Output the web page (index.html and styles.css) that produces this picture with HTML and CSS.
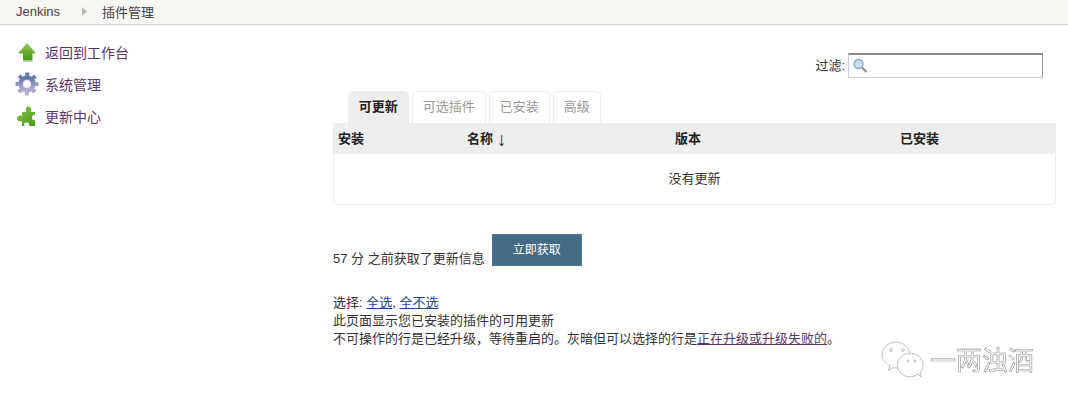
FILE: index.html
```html
<!DOCTYPE html>
<html lang="zh-CN">
<head>
  <meta charset="UTF-8">
  <title>插件管理 [Jenkins]</title>
  <link rel="stylesheet" href="styles.css">
</head>
<body>

  <div class="breadcrumbs">
    <a href="#">Jenkins</a>
    <svg class="crumb-arrow" width="5" height="9" viewBox="0 0 5 9"><path d="M0 0l5 4.500L0 9z" fill="#b4bab0"/></svg>
    <a href="#">插件管理</a>
  </div>

  <div class="page">
    <div class="side-panel">
      <div class="task">
        <svg class="task-icon" width="24" height="24" viewBox="0 0 24 24">
          <defs>
            <linearGradient id="up" x1="0" y1="0" x2="0" y2="1"><stop offset="0" stop-color="#9cc46a"/><stop offset=".5" stop-color="#6aae2c"/><stop offset="1" stop-color="#3f9a12"/></linearGradient>
          </defs>
          <path d="M12 3L21 13.500H17.500V20.500H8V13.500H3z" fill="url(#up)"/>
          <path d="M8 20.500h9.500V22H8z" fill="#c3cfba"/>
        </svg>
        <a href="#">返回到工作台</a>
      </div>
      <div class="task">
        <svg class="task-icon" width="24" height="24" viewBox="0 0 24 24">
          <defs>
            <linearGradient id="gear" x1="0" y1="0" x2="0" y2="1"><stop offset="0" stop-color="#5f78a8"/><stop offset=".55" stop-color="#9597c2"/><stop offset="1" stop-color="#b3b0cd"/></linearGradient>
          </defs>
          <circle cx="12" cy="12" r="9.500" fill="none" stroke="url(#gear)" stroke-width="4" stroke-dasharray="3.900 3.560" stroke-dashoffset="2"/>
          <circle cx="12" cy="12" r="6.500" fill="none" stroke="url(#gear)" stroke-width="4.500"/>
          <circle cx="12" cy="12" r="3.600" fill="#fff" stroke="#d5d5e2" stroke-width=".8"/>
        </svg>
        <a href="#">系统管理</a>
      </div>
      <div class="task">
        <svg class="task-icon" width="24" height="24" viewBox="0 0 24 24">
          <defs>
            <linearGradient id="piece" x1="0" y1="0" x2="1" y2="1"><stop offset="0" stop-color="#8cc84a"/><stop offset="1" stop-color="#45991c"/></linearGradient>
          </defs>
          <path d="M7 8H11.500C10 5 11 2.500 13.500 2.500S17 5 15.500 8H20V11C18 10 17 12 17 13.500S18 17 20 16V22H14C15 20 13.500 18.500 11.500 18.500S8.500 20 9.500 22H7V17C5 18 2 17 2 14.500S5 11 7 12z" fill="url(#piece)"/>
        </svg>
        <a href="#">更新中心</a>
      </div>
    </div>

    <div class="main-panel">
      <div class="filter-row">
        <label for="filter">过滤:</label>
        <div class="filter-box">
          <svg width="16" height="16" viewBox="0 0 16 16">
            <circle cx="6.500" cy="6" r="4.500" fill="#c9dcf0" stroke="#86a6cb" stroke-width="1.300"/>
            <path d="M10 9.500l4.500 4.500" stroke="#8a8a8a" stroke-width="2"/>
          </svg>
          <input id="filter" type="text">
        </div>
      </div>

      <div class="tabs">
        <a class="tab active" href="#">可更新</a>
        <a class="tab" href="#">可选插件</a>
        <a class="tab" href="#">已安装</a>
        <a class="tab" href="#">高级</a>
      </div>

      <div class="plugins">
        <div class="plugins-head">
          <span class="col-install">安装</span>
          <span class="col-name">名称 <span class="sort-arrow">↓</span></span>
          <span class="col-version">版本</span>
          <span class="col-installed">已安装</span>
        </div>
        <div class="plugins-empty">没有更新</div>
      </div>

      <div class="update-row">
        <span>57 分 之前获取了更新信息</span>
        <button class="update-btn" type="button">立即获取</button>
      </div>

      <div class="notes">
        <div>选择: <a class="blue" href="#">全选</a>, <a class="blue" href="#">全不选</a></div>
        <div>此页面显示您已安装的插件的可用更新</div>
        <div>不可操作的行是已经升级，等待重启的。灰暗但可以选择的行是<a class="purple" href="#">正在升级或升级失败的</a>。</div>
      </div>
    </div>
  </div>

  <div class="watermark">
    <svg width="44" height="38" viewBox="0 0 44 38" fill="none" stroke="#bdbdbd" stroke-width="1">
      <path d="M9 24.500C4 22 1 18.500 1 14 1 7 7.500 1 15 1s14 6 14 13c0 7-6.500 13-14 13-1 0-2 0-3-.3L7.500 29.500z"/>
      <path d="M37 33C33 36.500 26 37 21.500 33.500 16 29.500 14.500 22 19 17c4.500-5.500 13-6.500 18.500-2 5.500 4.500 6 12.500 1.500 17l1 4z" fill="#fff"/>
      <circle cx="10" cy="9" r="1.400"/>
      <circle cx="22" cy="9" r="1.400"/>
      <circle cx="27" cy="20" r="1"/>
      <circle cx="34" cy="20" r="1"/>
    </svg>
    <span class="watermark-text">一两浊酒</span>
  </div>

</body>
</html>
```

FILE: styles.css
```css
body {
  margin: 0;
  padding: 0;
  background: #fff;
  color: #333;
  font-family: "Liberation Sans", "Noto Sans CJK SC", sans-serif;
  font-size: 13px;
  height: 407px;
  overflow: hidden;
  position: relative;
}

a {
  text-decoration: none;
}

.breadcrumbs {
  height: 24px;
  box-sizing: border-box;
  height: 25px;
  padding-bottom: 2px;
  background: #f6f7f2;
  border-bottom: 1px solid #d3d5cf;
  display: flex;
  align-items: center;
  padding-left: 16px;
}

.breadcrumbs a {
  color: #444;
}

.crumb-arrow {
  margin: 0 15px 0 22px;
}

.page {
  display: flex;
}

.side-panel {
  width: 333px;
  flex: none;
  padding: 11px 0 0 15px;
  box-sizing: border-box;
}

.task {
  display: flex;
  align-items: center;
  height: 32px;
  font-size: 14px;
}

.task a {
  color: #5c3566;
}

.task-icon {
  margin-right: 6px;
}

.main-panel {
  width: 723px;
  flex: none;
}

.filter-row {
  display: flex;
  justify-content: flex-end;
  align-items: center;
  gap: 3px;
  margin-top: 28px;
  padding-right: 13px;
  height: 25px;
}

.filter-row label {
  margin-bottom: 3px;
}

.filter-box {
  width: 190px;
  height: 22px;
  border: 1px solid #ccc;
  border-top: 2px solid #888;
  border-right-color: #999;
  display: flex;
  align-items: center;
  padding-left: 3px;
}

.filter-box input {
  border: 0;
  outline: 0;
  flex: 1;
  min-width: 0;
  background: transparent;
}

.tabs {
  display: flex;
  gap: 3.5px;
  margin: 13px 0 0 15px;
  height: 32px;
}

.tab {
  box-sizing: border-box;
  padding: 0 9.750px;
  line-height: 30px;
  border: 1px solid #eee;
  border-bottom: 0;
  border-radius: 5px 5px 0 0;
  color: #999;
}

.tab.active {
  background: #eee;
  color: #222;
  font-weight: bold;
}

.plugins {
  height: 82px;
  box-sizing: border-box;
  border: 1px solid #eee;
  border-radius: 0 0 4px 4px;
}

.plugins-head {
  background: #eee;
  height: 30px;
  box-sizing: border-box;
  padding-bottom: 4px;
  display: flex;
  align-items: center;
  font-weight: bold;
  color: #222;
}

.col-install {
  width: 128px;
  padding-left: 4px;
  box-sizing: border-box;
}

.col-name {
  width: 208px;
  margin-left: 5px;
  display: flex;
  align-items: center;
  gap: 4px;
}

.sort-arrow {
  font-weight: normal;
  font-size: 19px;
  line-height: 16px;
  margin-top: 5px;
}

.col-version {
  width: 225px;
}

.plugins-empty {
  text-align: center;
  line-height: 49px;
  color: #333;
}

.update-row {
  display: flex;
  align-items: flex-end;
  gap: 7px;
  margin-top: 29px;
  height: 32px;
}

.update-row span {
  line-height: 16px;
  margin-bottom: -1px;
}

.update-btn {
  width: 90px;
  height: 32px;
  background: #446b84;
  border: 1px solid #4f7a96;
  color: #fff;
  font: inherit;
  font-size: 12px;
  padding: 0 0 3px;
}

.notes {
  margin-top: 28px;
  line-height: 18px;
}

.blue {
  color: #204a87;
  text-decoration: underline;
}

.purple {
  color: #5c3566;
  text-decoration: underline;
}

.watermark {
  position: absolute;
  left: 881px;
  top: 340px;
  display: flex;
  align-items: center;
  gap: 5px;
  will-change: transform;
}

.watermark-text {
  font-size: 26px;
  color: #fff;
  -webkit-text-stroke: 0.6px #8f8f8f;
  margin-bottom: 3px;
}
```
